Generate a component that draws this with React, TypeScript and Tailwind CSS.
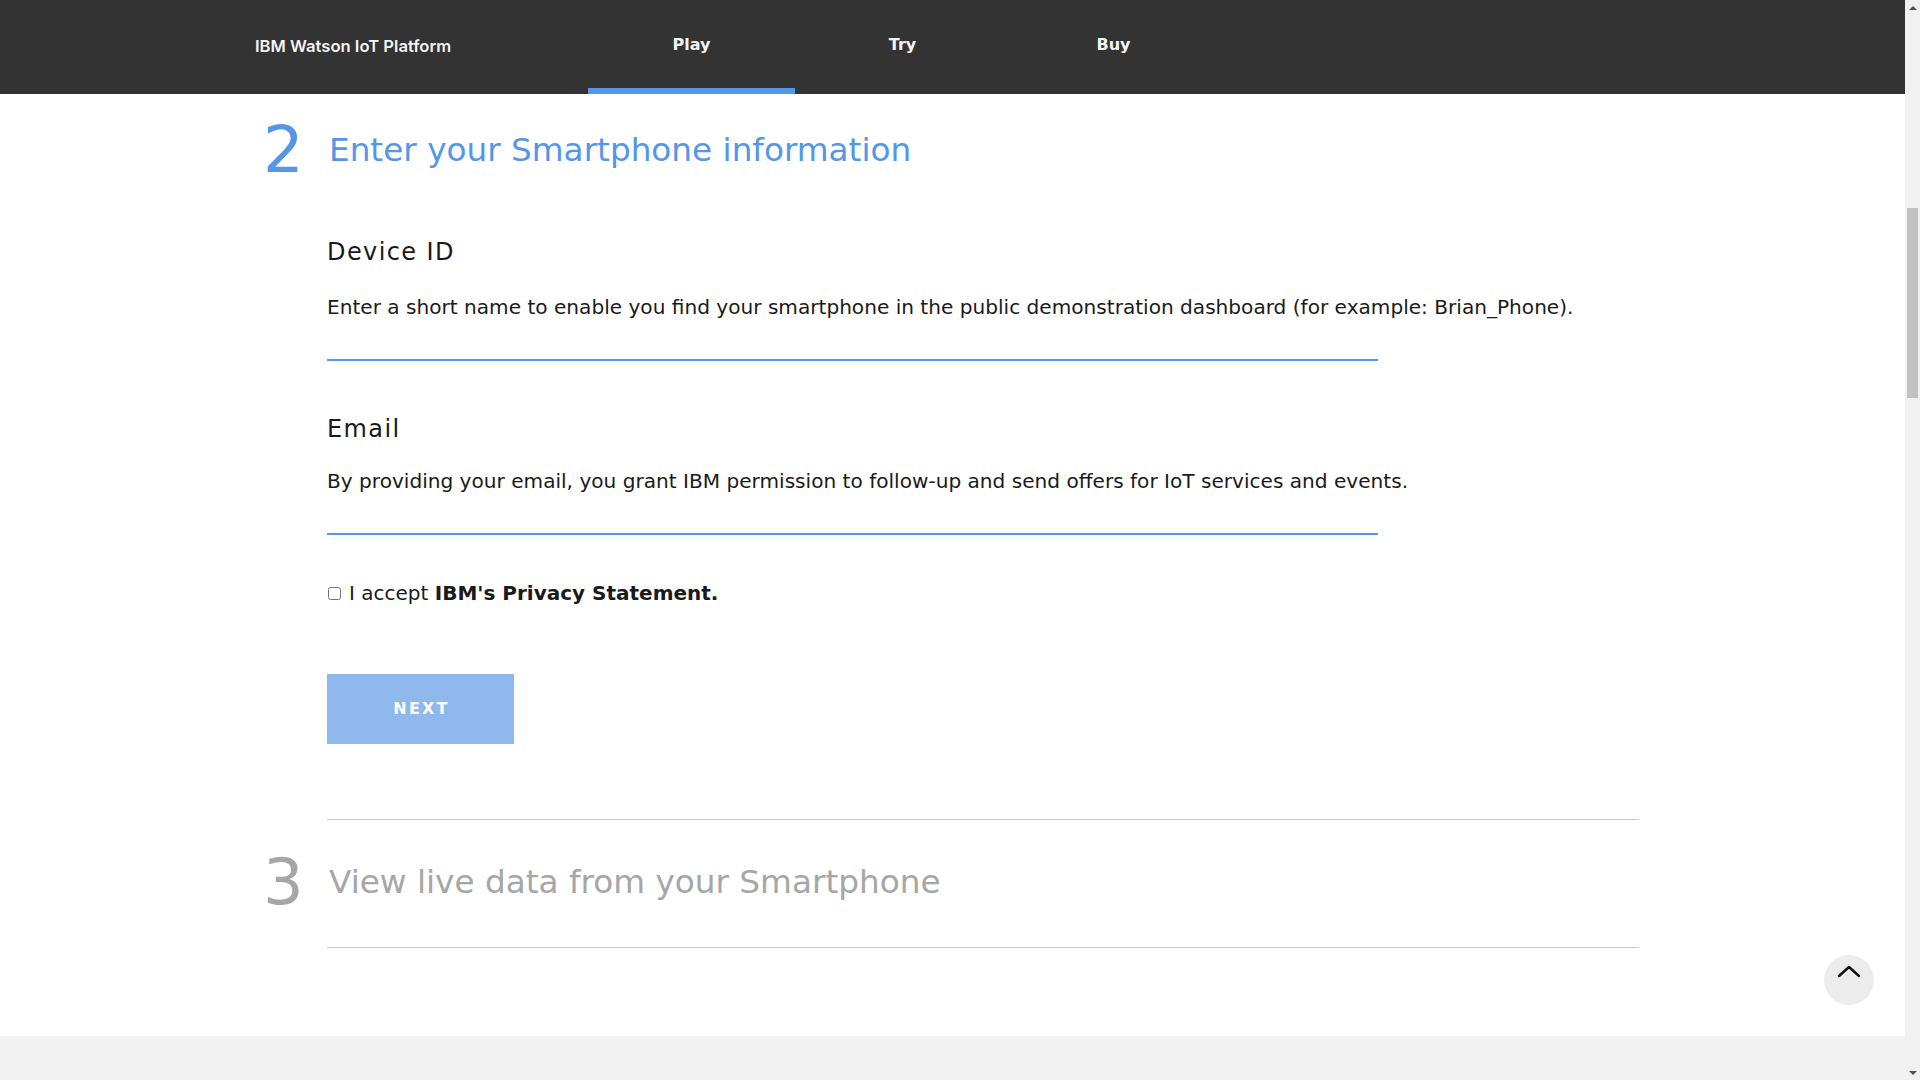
import { useState } from "react"

const navItems = ["Play", "Try", "Buy"]

function StepHeader({ n, title, active }: { n: string; title: string; active?: boolean }) {
  const color = active ? "text-[#5596e6]" : "text-[#a6a6a6]"
  return (
    <div className={`flex h-16 items-center ${color}`}>
      <div className="w-[66px] text-[64px] leading-none">{n}</div>
      <h2 className="text-[32.7px] leading-none">{title}</h2>
    </div>
  )
}

function Field({ label, help, helpGap, labelGap }: { label: string; help: string; helpGap: string; labelGap: string }) {
  return (
    <div className={labelGap}>
      <label className="block text-[24px] leading-none tracking-[1.4px] text-[#1a1a1a]">{label}</label>
      <p className={`${helpGap} text-[20.1px] leading-none text-[#1a1a1a]`}>{help}</p>
    </div>
  )
}

export default function App() {
  const [accepted, setAccepted] = useState(false)

  return (
    <div className="relative flex h-screen overflow-hidden bg-white font-['DejaVu_Sans',sans-serif]">
      <div className="flex min-w-0 flex-1 flex-col">
        {/* top bar */}
        <header className="flex h-[94px] shrink-0 bg-[#333333]">
          <div className="ml-[255px] w-[333px] pt-[38px] font-['Inter',sans-serif] text-[16.6px] leading-none font-semibold text-[#f4f4f4]">
            IBM Watson IoT Platform
          </div>
          <nav className="flex gap-1">
            {navItems.map((item) => (
              <a key={item} href="#" className="flex w-[207px] flex-col items-center">
                <span className="pt-[37px] text-[16px] leading-none font-bold text-[#f4f4f4]">{item}</span>
                <span className={`mt-auto h-[6px] w-full ${item === "Play" ? "bg-[#5596e6]" : ""}`} />
              </a>
            ))}
          </nav>
        </header>

        {/* step content */}
        <main className="flex-1 pl-[263px]">
          <div className="mt-6">
            <StepHeader n="2" title="Enter your Smartphone information" active />
          </div>

          <div className="pl-16">
            <Field
              label="Device ID"
              labelGap="mt-[58px]"
              helpGap="mt-[33px]"
              help="Enter a short name to enable you find your smartphone in the public demonstration dashboard (for example: Brian_Phone)."
            />
            <input type="text" className="mt-[4px] block h-10 w-[1051px] border-b-2 border-[#5596e6] text-[20px] outline-none" />

            <Field
              label="Email"
              labelGap="mt-[56px]"
              helpGap="mt-[30px]"
              help="By providing your email, you grant IBM permission to follow-up and send offers for IoT services and events."
            />
            <input type="email" className="mt-1 block h-10 w-[1051px] border-b-2 border-[#5596e6] text-[20px] outline-none" />

            <label className="mt-[48px] flex h-5 items-center text-[20px] leading-none text-[#1a1a1a]">
              <input
                type="checkbox"
                checked={accepted}
                onChange={(e) => setAccepted(e.target.checked)}
                className="ml-px mr-2 h-[13px] w-[13px]"
              />
              <span>
                I accept <b className="font-bold">IBM's Privacy Statement.</b>
              </span>
            </label>

            <button className="mt-[71px] flex h-[70px] w-[187px] items-center justify-center bg-[#8fb8ec] pl-[2px] text-[16px] leading-none font-bold tracking-[2.2px] text-white">
              NEXT
            </button>

            <div className="mt-[75px] h-px w-[1312px] bg-[#c8c8c8]" />
          </div>

          <div className="mt-[30px]">
            <StepHeader n="3" title="View live data from your Smartphone" />
          </div>
          <div className="ml-16 mt-[33px] h-px w-[1312px] bg-[#c8c8c8]" />
        </main>

        <footer className="h-[44px] shrink-0 bg-[#f1f1f1]" />
      </div>

      {/* scrollbar */}
      <div className="flex w-[15px] shrink-0 flex-col bg-[#f1f1f1]">
        <div className="flex h-[15px] items-center justify-center">
          <div className="h-0 w-0 border-x-[4px] border-b-[4px] border-x-transparent border-b-[#505050]" />
        </div>
        <div className="flex-1">
          <div className="mx-[2px] mt-[193px] h-[190px] bg-[#c1c1c1]" />
        </div>
        <div className="flex h-[15px] items-center justify-center">
          <div className="h-0 w-0 border-x-[4px] border-t-[4px] border-x-transparent border-t-[#505050]" />
        </div>
      </div>

      {/* back to top */}
      <button className="absolute right-[46px] bottom-[75px] flex h-[50px] w-[50px] items-start justify-center rounded-full bg-[#ececec] pt-[9px]">
        <svg width="24" height="14" viewBox="0 0 24 14" fill="none" stroke="#111" strokeWidth="2.5" strokeLinecap="round" strokeLinejoin="round">
          <path d="M2 12 L12 3 L22 12" />
        </svg>
      </button>
    </div>
  )
}
